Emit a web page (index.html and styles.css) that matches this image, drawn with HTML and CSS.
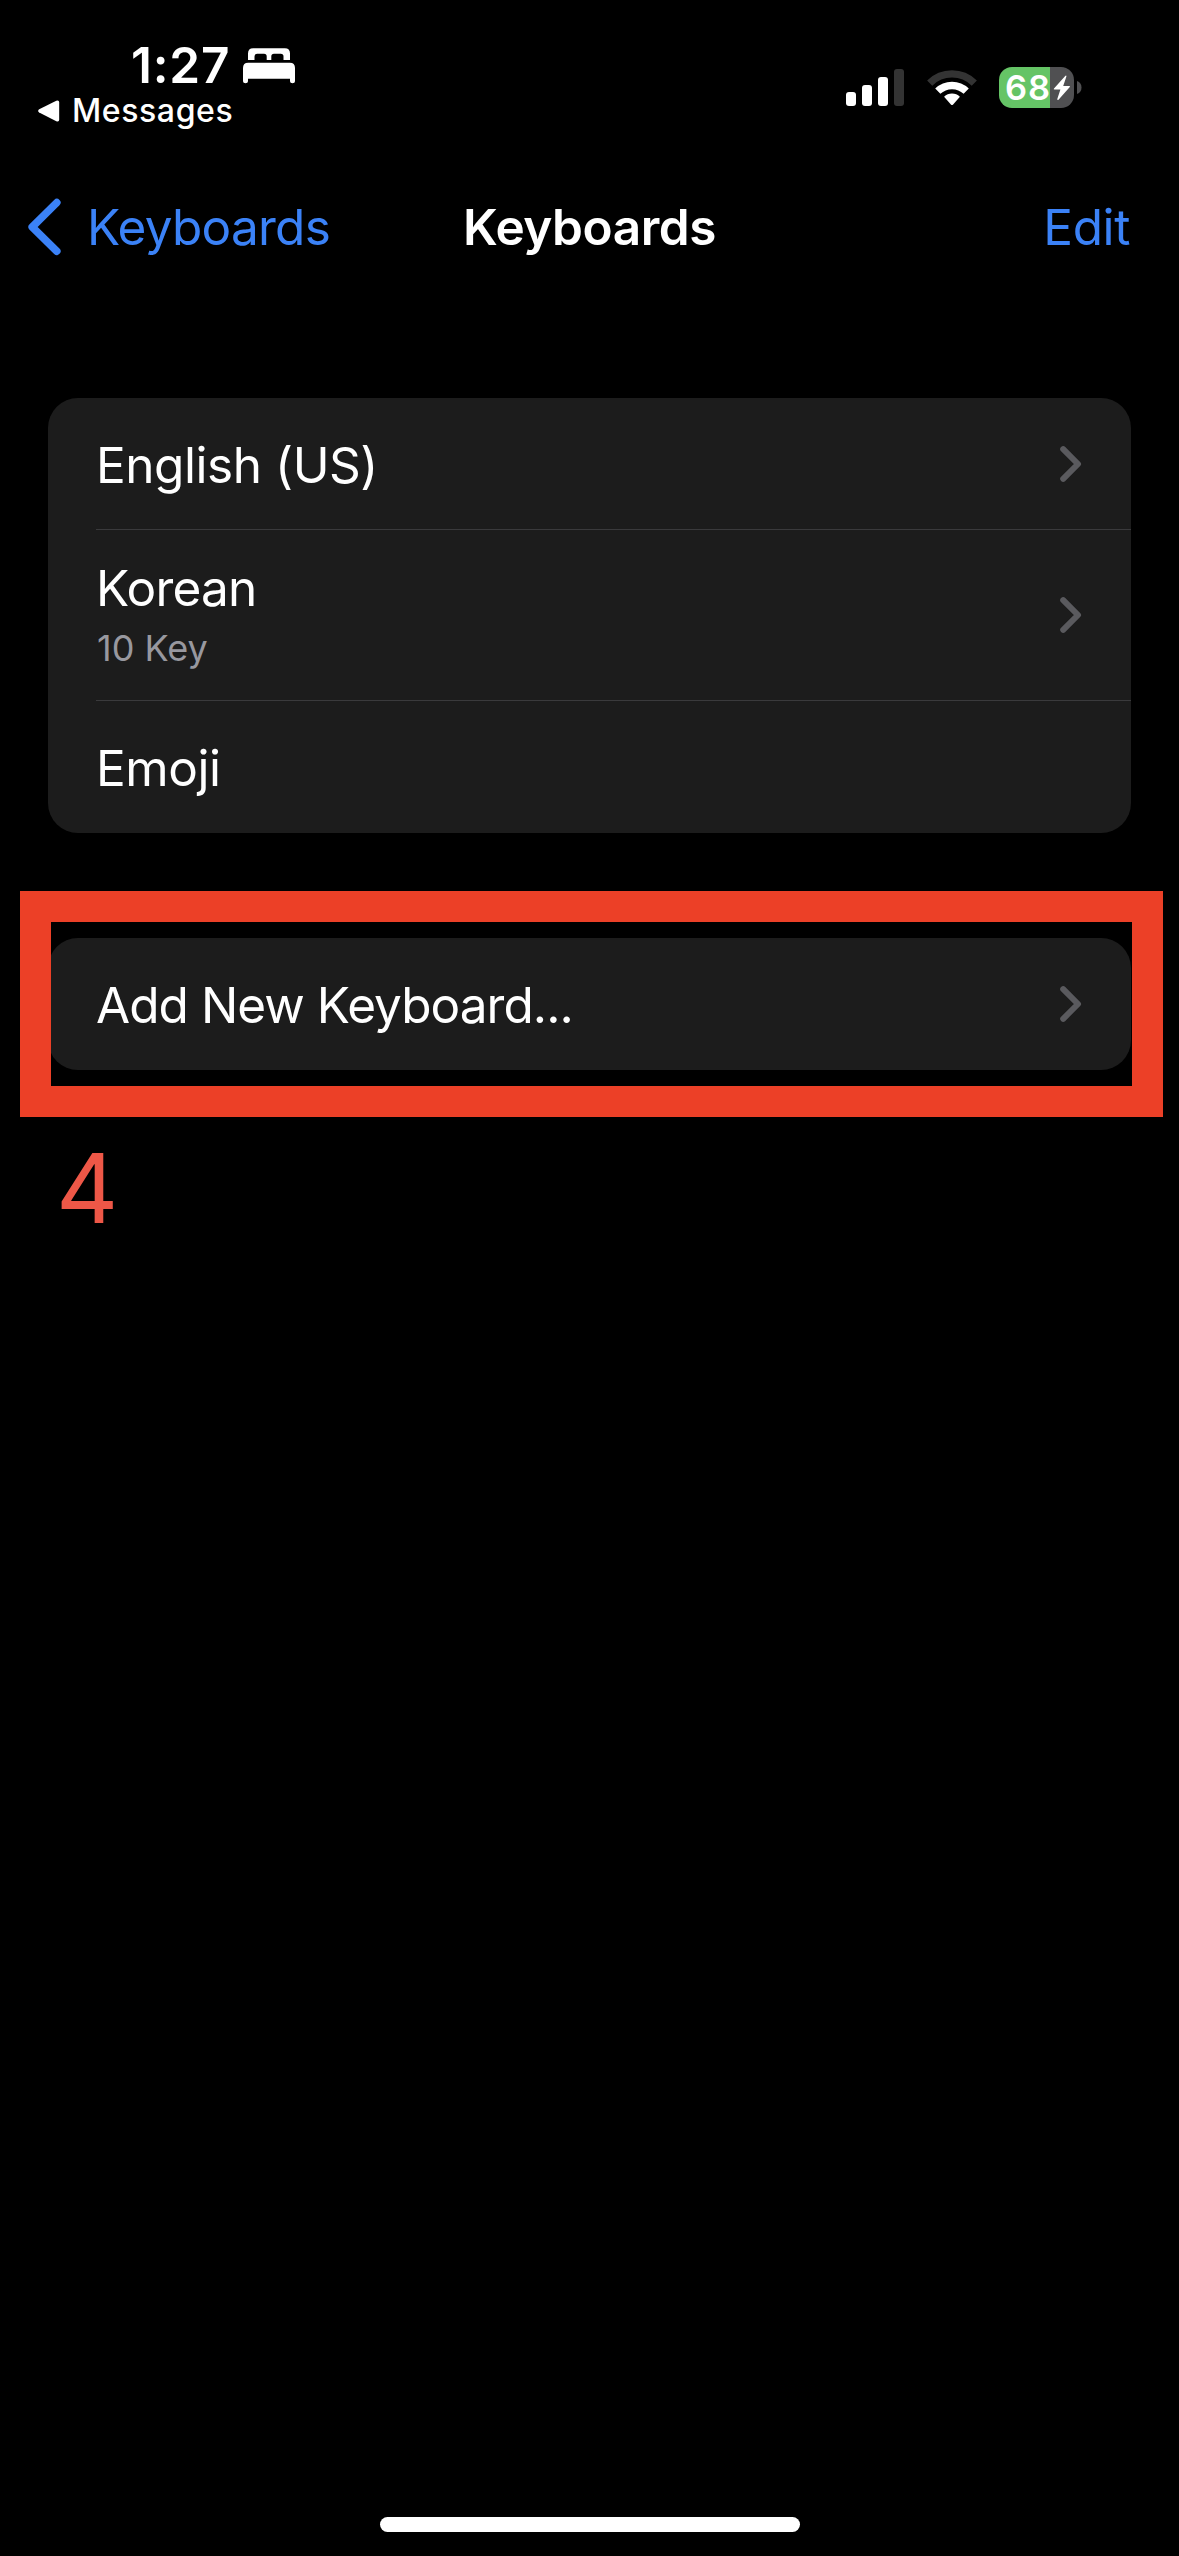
FILE: index.html
```
<!DOCTYPE html>
<html lang="en">
<head>
<meta charset="utf-8">
<title>Keyboards</title>
<link rel="stylesheet" href="styles.css">
</head>
<body>
<div class="screen">
  <header class="status">
    <div class="status-left">
      <div class="clock">
        <span class="time">1:27</span>
        <svg class="bed" width="52" height="36" viewBox="0 0 52 36" fill="#fff">
          <path d="M5 12V5.500Q5 0.300 10.200 0.300H41.800Q47 0.300 47 5.500V12H40.500V8.500Q40.500 5.800 37.800 5.800H31Q28.300 5.800 28.300 8.500V12H23.700V8.500Q23.700 5.800 21 5.800H14.200Q11.500 5.800 11.500 8.500V12Z"/>
          <path d="M0 20Q0 14.800 5.200 14.800H46.800Q52 14.800 52 20V33.200Q52 35.200 49.500 35.200Q47 35.200 47 33.200V30.700H5V33.200Q5 35.200 2.500 35.200Q0 35.200 0 33.200Z"/>
        </svg>
      </div>
      <div class="return-app">
        <svg width="22" height="22" viewBox="0 0 22 22" fill="#fff"><path d="M1.200 9.300L18.300 0.700Q21.200 -0.300 21.200 2.500V19.500Q21.200 22.200 18.300 21.200L1.200 12.600Q-0.900 11 1.200 9.300Z"/></svg>
        <span>Messages</span>
      </div>
    </div>
    <div class="status-right">
      <div class="signal"><i class="bar b1"></i><i class="bar b2"></i><i class="bar b3"></i><i class="bar b4"></i></div>
      <svg class="wifi" width="52" height="40" viewBox="0 0 52 40" fill="none">
        <path d="M3.700 15.100A31.700 31.700 0 0 1 48.300 15.100" stroke="#333" stroke-width="7.300"/>
        <path d="M11.800 23.200A20.400 20.400 0 0 1 40.200 23.200" stroke="#fff" stroke-width="7.400"/>
        <path d="M18.100 28.700A11.500 11.500 0 0 1 33.900 28.700L26.900 36.700Q26 37.500 25.100 36.700Z" fill="#fff"/>
      </svg>
      <div class="battery">
        <div class="cell">
          <span class="level">68</span>
          <svg class="bolt" width="18" height="26" viewBox="0 0 18 26" fill="#fff"><path d="M12.200 0.900L1 13.400Q0.200 14.500 1.500 14.500H7.400L4.300 24Q4.200 25.500 5.500 24.700L16.800 12.100Q17.500 11 16.200 10.900H10.200L13.400 1.400Q13.500 0 12.200 0.900Z"/></svg>
        </div>
        <svg class="nub" width="5" height="13" viewBox="0 0 5 13" fill="#505052"><path d="M0 0Q4.500 1.800 4.500 6.500T0 13Z"/></svg>
      </div>
    </div>
  </header>

  <nav class="nav">
    <a class="back">
      <svg width="34" height="58" viewBox="0 0 34 58" fill="none" stroke="#3b82f7" stroke-width="7.600" stroke-linecap="round" stroke-linejoin="round"><path d="M29.800 4.600L5.200 29L29.800 53.200"/></svg>
      <span>Keyboards</span>
    </a>
    <h1 class="title">Keyboards</h1>
    <a class="edit">Edit</a>
  </nav>

  <main class="content">
    <section class="card">
      <div class="row">
        <span class="label">English (US)</span>
        <svg class="chevron" viewBox="0 0 22 36"><path d="M3.200 3.200L18 18L3.200 32.800"/></svg>
      </div>
      <div class="row tall">
        <div class="stack"><span class="label korean">Korean</span><span class="detail">10 Key</span></div>
        <svg class="chevron" viewBox="0 0 22 36"><path d="M3.200 3.200L18 18L3.200 32.800"/></svg>
      </div>
      <div class="row last">
        <span class="label">Emoji</span>
      </div>
    </section>

    <div class="marked">
      <section class="card">
        <div class="row last">
          <span class="label add">Add New Keyboard...</span>
          <svg class="chevron" viewBox="0 0 22 36"><path d="M3.200 3.200L18 18L3.200 32.800"/></svg>
        </div>
      </section>
      <div class="highlight"></div>
    </div>
    <p class="step">4</p>
  </main>

  <div class="home-indicator"></div>
</div>
</body>
</html>
```
FILE: styles.css
```
* { box-sizing: border-box; margin: 0; padding: 0; }

body {
  background: #000;
  color: #fff;
  font-family: Inter, "Liberation Sans", sans-serif;
}

svg { display: block; flex: none; }

.screen {
  width: 1179px;
  height: 2556px;
  display: flex;
  flex-direction: column;
  overflow: hidden;
  background: #000;
}

/* Status bar */
.status {
  height: 167px;
  display: flex;
  justify-content: space-between;
  padding: 35px 97px 0 38px;
}

.clock {
  display: flex;
  align-items: flex-start;
  padding-left: 93px;
}

.time {
  width: 112px;
  font-size: 49.5px;
  font-weight: 600;
  line-height: 60px;
  letter-spacing: 0.8px;
}

.bed { margin-top: 13px; }

.return-app {
  display: flex;
  align-items: center;
  gap: 12px;
  height: 32px;
  font-size: 32px;
  font-weight: 500;
  line-height: 32px;
  letter-spacing: 0.6px;
}

.status-right {
  display: flex;
  align-items: flex-start;
  padding-top: 32px;
}

.signal {
  display: flex;
  align-items: flex-end;
  gap: 6px;
  height: 39px;
}

.bar { width: 10px; border-radius: 3px; background: #fff; }
.b1 { height: 14px; }
.b2 { height: 21px; }
.b3 { height: 29px; }
.b4 { height: 37px; background: #333; }

.wifi { margin: 1px 21.5px 0 21.5px; }

.battery { display: flex; align-items: center; gap: 3px; }

.cell {
  display: flex;
  align-items: center;
  width: 75px;
  height: 41px;
  padding-left: 6px;
  border-radius: 13px;
  background: linear-gradient(90deg, #65c466 51px, #505052 51px);
}

.level {
  width: 47.5px;
  font-size: 34.5px;
  font-weight: 600;
  line-height: 41px;
  letter-spacing: 1px;
}

/* Navigation bar */
.nav {
  display: grid;
  grid-template-columns: 1fr auto 1fr;
  align-items: center;
  height: 120px;
  padding: 0 27px;
  font-size: 49.5px;
  line-height: 60px;
}

.back, .edit { color: #3b82f7; letter-spacing: -0.75px; }
.back { display: flex; align-items: center; gap: 26px; }
.title { font-size: 49.5px; font-weight: 600; letter-spacing: -0.45px; }
.edit { margin-right: 22px; text-align: right; letter-spacing: -0.4px; }

/* Grouped lists */
.content { flex: 1; padding: 111px 48px 0; }

.card {
  border-radius: 30px;
  background: #1c1c1c;
  overflow: hidden;
}

.row {
  display: flex;
  align-items: center;
  justify-content: space-between;
  height: 132px;
  margin-left: 48px;
  padding-right: 49px;
  border-bottom: 1px solid #3a3a3c;
}

.row.tall { height: 171px; }
.row.last { border-bottom: 0; }

.label {
  font-size: 49.5px;
  line-height: 60px;
  letter-spacing: -0.45px;
  padding-top: 3px;
}

.row.last .label { padding-top: 1px; }
.label.korean { letter-spacing: -0.8px; }
.label.add { letter-spacing: -0.95px; }

.stack { display: flex; flex-direction: column; padding-top: 3px; }

.detail {
  padding-left: 1px;
  font-size: 36px;
  line-height: 60px;
  color: #98989f;
  letter-spacing: 0;
}

.chevron {
  width: 22px;
  height: 36px;
  fill: none;
  stroke: #5a5a5e;
  stroke-width: 6px;
  stroke-linecap: round;
  stroke-linejoin: round;
}

.marked { position: relative; margin-top: 105px; }

/* Annotation frame laid over the second card */
.highlight {
  position: absolute;
  top: -47px;
  left: -28px;
  width: 1143px;
  height: 226px;
  border: 31px solid #ec4027;
}

.step {
  margin-top: 58px;
  padding-left: 8px;
  font-size: 96.5px;
  line-height: 120px;
  color: #ee5747;
}

.home-indicator {
  width: 420px;
  height: 15px;
  margin: 0 auto 24px;
  border-radius: 7.500px;
  background: #fff;
}
```
